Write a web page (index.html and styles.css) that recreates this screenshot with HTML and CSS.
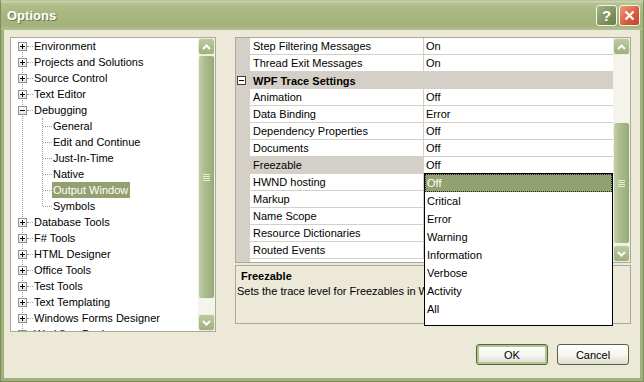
FILE: index.html
```html
<!DOCTYPE html>
<html lang="en">
 <head>
   <meta charset="utf-8"/>
   <title>Options</title>
   <link rel="stylesheet" href="styles.css">
 </head>

 <body>
   <div class="window">
      <div class="titlebar">
         <span class="caption">Options</span>
         <span class="capbtn help">?</span>
         <span class="capbtn close">
            <svg width="11" height="11" viewBox="0 0 11 11"><path d="M1.5 1.5 L9.5 9.5 M9.5 1.5 L1.5 9.5" stroke="#fff" stroke-width="2.2" fill="none"/></svg>
         </span>
      </div>

      <div class="client">
         <div class="main">
            <!-- left tree -->
            <div class="tree">
               <div class="tree-list">
                  <div class="node"><i class="exp plus"></i><i class="stub"></i><span class="label">Environment</span></div>
                  <div class="node"><i class="exp plus"></i><i class="stub"></i><span class="label">Projects and Solutions</span></div>
                  <div class="node"><i class="exp plus"></i><i class="stub"></i><span class="label">Source Control</span></div>
                  <div class="node"><i class="exp plus"></i><i class="stub"></i><span class="label">Text Editor</span></div>
                  <div class="node"><i class="exp"></i><i class="stub"></i><span class="label">Debugging</span></div>
                  <div class="children">
                     <div class="node sub"><i class="stub"></i><span class="label">General</span></div>
                     <div class="node sub"><i class="stub"></i><span class="label">Edit and Continue</span></div>
                     <div class="node sub"><i class="stub"></i><span class="label">Just-In-Time</span></div>
                     <div class="node sub"><i class="stub"></i><span class="label">Native</span></div>
                     <div class="node sub"><i class="stub"></i><span class="label selected">Output Window</span></div>
                     <div class="node sub"><i class="stub"></i><span class="label">Symbols</span></div>
                  </div>
                  <div class="node"><i class="exp plus"></i><i class="stub"></i><span class="label">Database Tools</span></div>
                  <div class="node"><i class="exp plus"></i><i class="stub"></i><span class="label">F# Tools</span></div>
                  <div class="node"><i class="exp plus"></i><i class="stub"></i><span class="label">HTML Designer</span></div>
                  <div class="node"><i class="exp plus"></i><i class="stub"></i><span class="label">Office Tools</span></div>
                  <div class="node"><i class="exp plus"></i><i class="stub"></i><span class="label">Test Tools</span></div>
                  <div class="node"><i class="exp plus"></i><i class="stub"></i><span class="label">Text Templating</span></div>
                  <div class="node"><i class="exp plus"></i><i class="stub"></i><span class="label">Windows Forms Designer</span></div>
                  <div class="node"><i class="exp plus"></i><i class="stub"></i><span class="label">Workflow Designer</span></div>
               </div>
               <div class="vscroll">
                  <span class="sbtn"><svg width="9" height="6" viewBox="0 0 9 6"><path d="M1 5 L4.5 1.5 L8 5" stroke="#fff" stroke-width="2" fill="none"/></svg></span>
                  <span class="track"><span class="thumb tree-thumb"><i class="grip"></i></span></span>
                  <span class="sbtn"><svg width="9" height="6" viewBox="0 0 9 6"><path d="M1 1 L4.5 4.5 L8 1" stroke="#fff" stroke-width="2" fill="none"/></svg></span>
               </div>
            </div>

            <!-- property grid + description -->
            <div class="right">
               <div class="grid">
                  <div class="rows">
                     <div class="row"><span class="name">Step Filtering Messages</span><span class="val">On</span></div>
                     <div class="row"><span class="name">Thread Exit Messages</span><span class="val">On</span></div>
                     <div class="row cat"><i class="exp dark"></i><span>WPF Trace Settings</span></div>
                     <div class="row"><span class="name">Animation</span><span class="val">Off</span></div>
                     <div class="row"><span class="name">Data Binding</span><span class="val">Error</span></div>
                     <div class="row"><span class="name">Dependency Properties</span><span class="val">Off</span></div>
                     <div class="row"><span class="name">Documents</span><span class="val">Off</span></div>
                     <div class="row current"><span class="name">Freezable</span><span class="val">Off</span></div>
                     <!-- values of these rows sit under the open list -->
                     <div class="row"><span class="name">HWND hosting</span><span class="val"></span></div>
                     <div class="row"><span class="name">Markup</span><span class="val"></span></div>
                     <div class="row"><span class="name">Name Scope</span><span class="val"></span></div>
                     <div class="row"><span class="name">Resource Dictionaries</span><span class="val"></span></div>
                     <div class="row"><span class="name">Routed Events</span><span class="val"></span></div>
                  </div>
                  <div class="vscroll">
                     <span class="sbtn"><svg width="9" height="6" viewBox="0 0 9 6"><path d="M1 5 L4.5 1.5 L8 5" stroke="#fff" stroke-width="2" fill="none"/></svg></span>
                     <span class="track"><span class="thumb grid-thumb"><i class="grip"></i></span></span>
                     <span class="sbtn"><svg width="9" height="6" viewBox="0 0 9 6"><path d="M1 1 L4.5 4.5 L8 1" stroke="#fff" stroke-width="2" fill="none"/></svg></span>
                  </div>

                  <ul class="dropdown">
                     <li class="hot">Off</li>
                     <li>Critical</li>
                     <li>Error</li>
                     <li>Warning</li>
                     <li>Information</li>
                     <li>Verbose</li>
                     <li>Activity</li>
                     <li>All</li>
                  </ul>
               </div>
               <div class="desc">
                  <p class="desc-title">Freezable</p>
                  <p class="desc-text">Sets the trace level for Freezables in WPF applications.</p>
               </div>
            </div>
         </div>

         <div class="buttons">
            <button class="btn default">OK</button>
            <button class="btn">Cancel</button>
         </div>
      </div>
   </div>
 </body>
</html>
```

FILE: styles.css
```css
/*####### reset #######*/
   *{margin:0; padding:0; box-sizing:border-box;}
   ul{list-style:none;}
   i{font-style:normal; display:block;}

   body{width:644px; height:382px; overflow:hidden; background:#ece9d8; color:#000; font:11px "Liberation Sans", Arial, sans-serif;}

/*####### window frame #######*/
   .window{width:644px; height:382px; display:flex; flex-direction:column; border:1px solid #7e8e5a; border-top-color:#b9c59a;}

   .titlebar{height:29px; display:flex; align-items:center; padding:0 3px 0 6px;
      background:linear-gradient(#cdd6ae 0, #b3c08d 3px, #a8b680 40%, #a3b27b 85%, #b4c190 100%);}
   .caption{flex:1; color:#fff; font:bold 13px "Liberation Sans", Arial, sans-serif; text-shadow:1px 1px 0 #6c7b4a;}
   .capbtn{width:21px; height:21px; margin-left:2px; border:1px solid #f4f6ee; border-radius:3px; display:flex; align-items:center; justify-content:center; color:#fff; font:bold 15px "Liberation Sans", Arial, sans-serif;}
   .help{background:linear-gradient(135deg, #a3b386, #7a8c56 70%, #6c7f4a);}
   .close{background:linear-gradient(135deg, #ee9a7c, #d35c3c 60%, #bf4528);}

   .client{flex:1; display:flex; flex-direction:column; padding:7px 9px 0 6px; border:3px solid #a1b17c; border-top:0;}

   .main{display:flex; gap:19px;}

/*####### tree #######*/
   .tree{width:206px; height:295px; border:1px solid #a9ab98; background:#fff; display:flex;}
   .tree-list{flex:1; overflow:hidden; position:relative;}
   .tree-list:before{content:""; position:absolute; left:11px; top:8px; height:100%; border-left:1px dotted #a0a0a0;}

   .node{height:16px; display:flex; align-items:center; padding-left:7px; white-space:nowrap;}
   .stub{width:6px; border-top:1px dotted #a0a0a0;}
   .label{height:16px; line-height:16px; padding:0 2px 0 1px;}
   .label.selected{background:#93a070; color:#fff;}

   .children{position:relative;}
   .children:before{content:""; position:absolute; left:31px; top:0; bottom:8px; border-left:1px dotted #a0a0a0;}
   .sub{padding-left:32px;}
   .sub .stub{width:9px;}

   /* +/- boxes */
   .exp{position:relative; width:9px; height:9px; border:1px solid #919191; background:linear-gradient(#fff, #e4e3dc);}
   .exp:before{content:""; position:absolute; left:1px; top:3px; width:5px; height:1px; background:#000;}
   .plus:after{content:""; position:absolute; left:3px; top:1px; width:1px; height:5px; background:#000;}
   .exp.dark{border-color:#3c3c3c; background:#fff;}

/*####### scrollbars #######*/
   .vscroll{width:17px; display:flex; flex-direction:column; background:#f4f3ec;}
   .sbtn{height:17px; flex:none; display:flex; align-items:center; justify-content:center; border:1px solid #e8ecdc; border-radius:3px; background:linear-gradient(#bccaa2, #9fb07d);}
   .track{flex:1; display:flex; flex-direction:column;}
   .thumb{display:flex; align-items:center; justify-content:center; border:1px solid #eef1e4; border-radius:3px;
      background:linear-gradient(90deg, #c3cfa9, #acbd8f 35%, #9fb17f 80%, #95a873);}
   .tree-thumb{height:244px;}
   .grid-thumb{height:122px; margin-top:67px;}
   .grip{width:7px; height:7px; background:repeating-linear-gradient(#e6ecd8 0 1px, transparent 1px 2px);}

/*####### property grid #######*/
   .right{width:396px; display:flex; flex-direction:column; gap:2px;}
   .grid{height:226px; border:1px solid #aca899; display:flex; position:relative; background:#fff;}
   .rows{flex:1; overflow:hidden; display:flex; flex-direction:column; background:linear-gradient(90deg, #d4d0c8 14px, #fff 14px);}

   .row{height:17px; flex:none; display:flex; padding-left:14px; white-space:nowrap;}
   .name{width:174px; padding-left:3px; line-height:16px; border-bottom:1px solid #d4d0c8; border-right:1px solid #d4d0c8; background:#fff;}
   .val{flex:1; padding-left:2px; line-height:16px; border-bottom:1px solid #d4d0c8; background:#fff;}
   .row.current .name{background:#d4d0c8;}

   .row.cat{background:#d4d0c8; padding-left:1px; align-items:center; font-weight:bold;}
   .cat .exp{margin-right:7px;}

   /* open value list */
   .dropdown{position:absolute; left:188px; top:135px; width:189px; height:153px; border:1px solid #000; background:#fff;}
   .dropdown li{height:18px; line-height:18px; padding-left:2px;}
   .dropdown li.hot{background:#93a070; color:#fff; outline:1px dotted #222; outline-offset:-1px;}

   .desc{height:59px; border:1px solid #aca899; padding:3px 1px; overflow:hidden; white-space:nowrap;}
   .desc-title{font-weight:bold; line-height:15px; padding-left:4px;}
   .desc-text{line-height:15px;}

/*####### buttons #######*/
   .buttons{display:flex; justify-content:flex-end; gap:9px; margin-top:12px; padding-right:2px;}
   .btn{width:72px; height:21px; font:11px "Liberation Sans", Arial, sans-serif; color:#000; border:1px solid #56633f; border-radius:3px;
      background:linear-gradient(#fff, #f5f4ee 55%, #dedcd0);}
   .btn.default{box-shadow:inset 0 0 0 2px #afc68c;}
```
